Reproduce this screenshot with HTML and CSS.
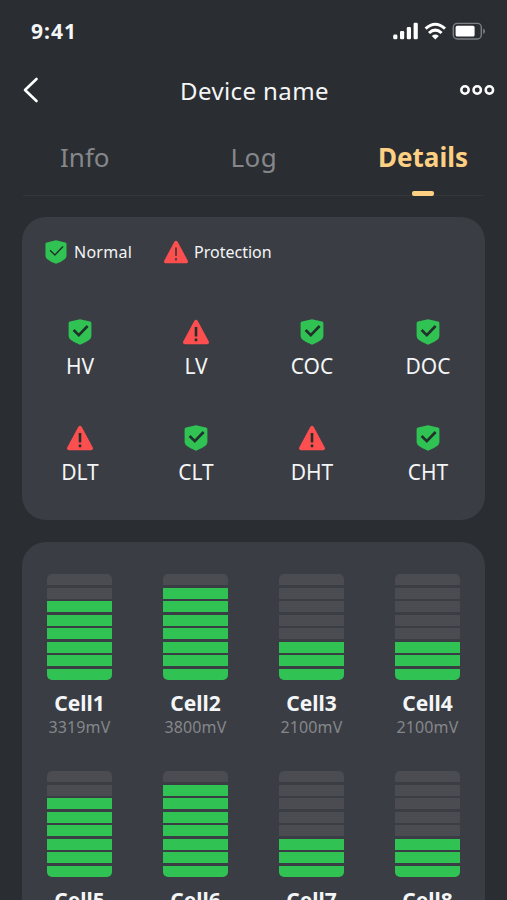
FILE: index.html
```html
<!DOCTYPE html>
<html lang="en">
<head>
<meta charset="utf-8">
<meta name="viewport" content="width=device-width, initial-scale=1">
<title>Device name</title>
<link rel="stylesheet" href="styles.css">
</head>
<body>
<svg class="defs">
	<symbol id="ok" viewBox="0 0 26 26">
		<path fill="#30c253" d="M13 0.3 L23 2.6 Q24.4 2.9 24.4 4.2 V17 Q24.4 19.4 22.4 20.8 Q19 23.6 13 25.8 Q7 23.6 3.6 20.8 Q1.6 19.4 1.6 17 V4.2 Q1.6 2.9 3 2.6Z"/>
		<path class="tick" d="M6.6 11 L11.8 16.2 L20.6 7"/>
	</symbol>
	<symbol id="warn" viewBox="0 0 26 26">
		<path fill="#fd4f4f" d="M11.2 2 Q13 -.4 14.8 2 L25.8 22.4 Q26.6 25.2 24 25.2 H2 Q-.6 25.2 .2 22.4Z"/>
		<path class="tick" d="M13 8 V17.4 M13 19.6 V22.2"/>
	</symbol>
</svg>
<div class="page">
	<div class="status">
		<span class="time">9:41</span>
		<svg class="signal" width="94" height="20" viewBox="0 0 94 20">
			<g fill="#fff">
				<rect x="1.2" y="13.5" width="4.2" height="4.8" rx="1.4"/>
				<rect x="8" y="10" width="4.2" height="8.3" rx="1.2"/>
				<rect x="14.8" y="6" width="4.2" height="12.3" rx="1.2"/>
				<rect x="21.6" y="1.8" width="4.2" height="16.5" rx="1.2"/>
				<path d="M43.3 18.6 L39.8 15 Q43.3 12.2 46.8 15Z"/>
			</g>
			<path fill="none" stroke="#fff" stroke-width="3" d="M33.6 7.6 Q43.3 -1.2 53 7.6 M37 12 Q43.3 6.2 49.6 12"/>
			<rect x="61.3" y="2.4" width="28" height="15.6" rx="4" fill="none" stroke="#7d8083" stroke-width="1.4"/>
			<rect x="63.6" y="4.8" width="19" height="10.8" rx="1.6" fill="#fff"/>
			<path fill="#7d8083" d="M91.2 7.4 Q93 8.2 93 10.2 T91.2 13Z"/>
		</svg>
	</div>

	<div class="navbar">
		<svg width="16" height="26" viewBox="0 0 16 26"><path fill="none" stroke="#fff" stroke-width="2.6" stroke-linecap="round" stroke-linejoin="round" d="M13.5 2 L2 13 L13.5 24"/></svg>
		<h1>Device name</h1>
		<svg width="36" height="12" viewBox="0 0 36 12"><g fill="none" stroke="#fff" stroke-width="2.5"><circle cx="6" cy="6" r="3.7"/><circle cx="18.2" cy="6" r="3.7"/><circle cx="30.4" cy="6" r="3.7"/></g></svg>
	</div>

	<div class="tabs">
		<a class="tab">Info</a>
		<a class="tab">Log</a>
		<a class="tab active">Details</a>
	</div>

	<div class="card state">
		<div class="legend">
			<svg class="ico"><use href="#ok"/></svg><span class="normal">Normal</span>
			<svg class="ico"><use href="#warn"/></svg><span>Protection</span>
		</div>
		<ul class="alarms">
			<li><svg class="ico"><use href="#ok"/></svg>HV</li>
			<li><svg class="ico"><use href="#warn"/></svg>LV</li>
			<li><svg class="ico"><use href="#ok"/></svg>COC</li>
			<li><svg class="ico"><use href="#ok"/></svg>DOC</li>
			<li><svg class="ico"><use href="#warn"/></svg>DLT</li>
			<li><svg class="ico"><use href="#ok"/></svg>CLT</li>
			<li><svg class="ico"><use href="#warn"/></svg>DHT</li>
			<li><svg class="ico"><use href="#ok"/></svg>CHT</li>
		</ul>
	</div>

	<div class="card cells">
		<div class="cell"><div class="bar"><i></i><i></i><i class="on"></i><i class="on"></i><i class="on"></i><i class="on"></i><i class="on"></i><i class="on"></i></div><b>Cell1</b><span>3319mV</span></div>
		<div class="cell"><div class="bar"><i></i><i class="on"></i><i class="on"></i><i class="on"></i><i class="on"></i><i class="on"></i><i class="on"></i><i class="on"></i></div><b>Cell2</b><span>3800mV</span></div>
		<div class="cell"><div class="bar"><i></i><i></i><i></i><i></i><i></i><i class="on"></i><i class="on"></i><i class="on"></i></div><b>Cell3</b><span>2100mV</span></div>
		<div class="cell"><div class="bar"><i></i><i></i><i></i><i></i><i></i><i class="on"></i><i class="on"></i><i class="on"></i></div><b>Cell4</b><span>2100mV</span></div>
		<div class="cell"><div class="bar"><i></i><i></i><i class="on"></i><i class="on"></i><i class="on"></i><i class="on"></i><i class="on"></i><i class="on"></i></div><b>Cell5</b></div>
		<div class="cell"><div class="bar"><i></i><i class="on"></i><i class="on"></i><i class="on"></i><i class="on"></i><i class="on"></i><i class="on"></i><i class="on"></i></div><b>Cell6</b></div>
		<div class="cell"><div class="bar"><i></i><i></i><i></i><i></i><i></i><i class="on"></i><i class="on"></i><i class="on"></i></div><b>Cell7</b></div>
		<div class="cell"><div class="bar"><i></i><i></i><i></i><i></i><i></i><i class="on"></i><i class="on"></i><i class="on"></i></div><b>Cell8</b></div>
	</div>
</div>
</body>
</html>
```
FILE: styles.css
```css
*{box-sizing:border-box;}
body,h1,ul{margin:0;padding:0;}
ul{list-style:none;}
body{background:#2a2d31;color:#f4f5f6;font-family:"Noto Sans","Open Sans",sans-serif;}
svg{display:block;flex:none;}
.defs{display:none;}
.page{height:900px;overflow:hidden;}

.status{display:flex;justify-content:space-between;align-items:center;height:62px;padding:0 21px 0 31px;}
.time{font-size:21px;font-weight:700;line-height:28px;letter-spacing:1px;}

.navbar{display:flex;align-items:center;justify-content:space-between;height:56px;padding:0 12px 0 23px;}
.navbar h1{font-size:24px;font-weight:400;line-height:32px;letter-spacing:.4px;padding:2px 0 0 11px;}

.tabs{display:flex;justify-content:space-between;height:78px;margin:0 23px;padding:0 16px 0 37px;border-bottom:1px solid #33373a;}
.tab{position:relative;color:#85878b;font-size:26px;line-height:36px;padding-top:21px;}
.tab:nth-child(2){margin-left:20px;letter-spacing:.4px;}
.tab.active{color:#fdd083;font-weight:700;}
.tab.active:after{content:"";position:absolute;left:50%;bottom:-1px;width:22px;height:5px;margin-left:-11px;border-radius:2px;background:#fdd083;}

.card{margin:0 22px;border-radius:24px;background:#3a3d43;}
.state{height:303px;margin-top:21px;}
.ico{width:26px;height:26px;stroke-width:2.6;}
.tick{fill:none;stroke:#22302b;}
.legend{display:flex;align-items:center;padding:22px 0 0 22px;font-size:16px;line-height:26px;}
.legend .ico{width:24px;height:24px;stroke-width:1.5;}
.legend span{margin-left:6px;}
.legend .normal{margin-right:32px;letter-spacing:.25px;}
.alarms{display:grid;grid-template-columns:repeat(4,116px);grid-auto-rows:106px;padding-top:54px;}
.alarms li{display:flex;flex-direction:column;align-items:center;font-size:21px;line-height:36px;}
.alarms .ico{margin-bottom:3px;}

.cells{display:grid;grid-template-columns:repeat(4,65px);column-gap:51px;grid-auto-rows:197px;height:400px;margin-top:22px;padding:32px 0 0 25px;}
.cell{display:flex;flex-direction:column;align-items:center;}
.bar{display:flex;flex-direction:column;justify-content:space-between;width:65px;height:106px;border-radius:5px;overflow:hidden;}
.bar i{height:11px;background:#4a4c52;}
.bar .on{background:#30c253;}
.cell b{margin-top:8px;font-size:21px;line-height:30px;}
.cell span{color:#85878b;font-size:16px;line-height:18px;letter-spacing:.1px;}
```
